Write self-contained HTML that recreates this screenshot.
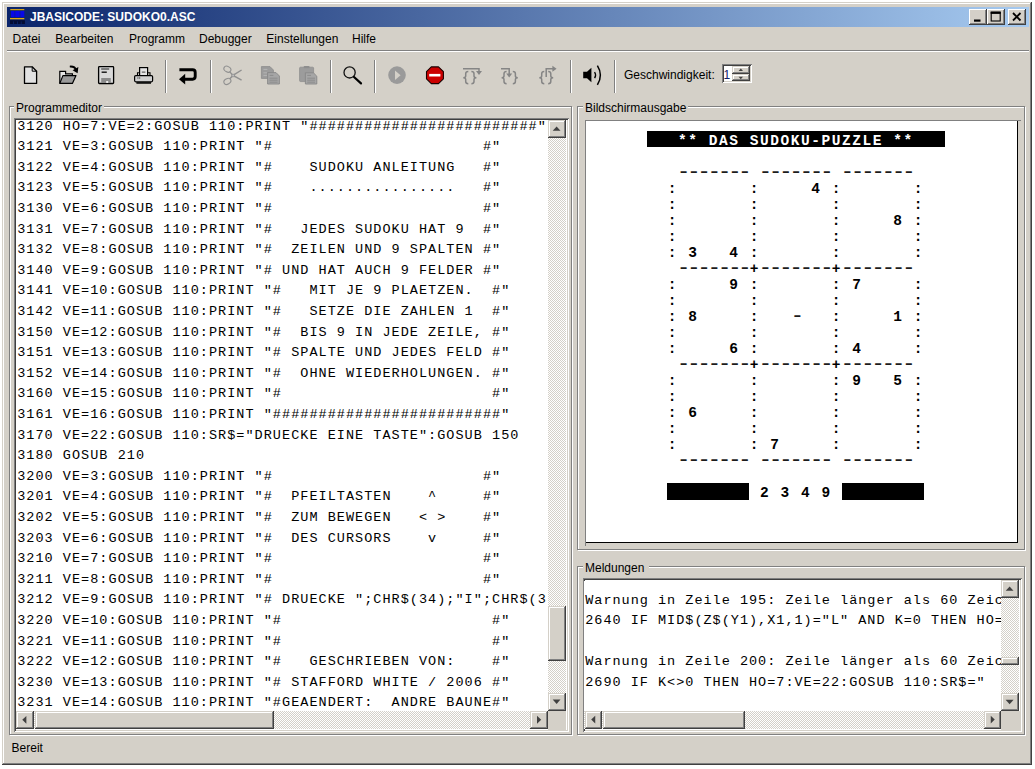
<!DOCTYPE html>
<html lang="de">
<head>
<meta charset="utf-8">
<title>JBASICODE: SUDOKO0.ASC</title>
<style>
html,body{margin:0;padding:0;}
body{width:1035px;height:769px;background:#fff;position:relative;overflow:hidden;
  font-family:"Liberation Sans",sans-serif;font-size:12px;color:#000;}
div,span,pre{box-sizing:border-box;}
.abs,.abs>*{position:absolute;}
#win{position:absolute;left:2px;top:2px;width:1030px;height:763px;background:#d4d0c8;
  box-shadow:inset -1px -1px #404040, inset 1px 1px #d4d0c8, inset -2px -2px #808080, inset 2px 2px #fff;}
#title{position:absolute;left:7px;top:7px;width:1022px;height:20px;
  background:linear-gradient(90deg,#0a246a 0%,#a6caf0 100%);}
#ttext{position:absolute;left:30px;top:7px;height:20px;line-height:20px;color:#fff;font-weight:bold;
  font-size:12px;white-space:pre;letter-spacing:0px;}
.cbtn{position:absolute;top:9px;height:16px;width:17.5px;background:#d4d0c8;
  box-shadow:inset -1px -1px #404040, inset 1px 1px #fff, inset -2px -2px #808080, inset 2px 2px #d4d0c8;}
.menu{position:absolute;top:31px;height:16px;line-height:16px;font-size:12px;white-space:pre;transform-origin:0 50%;}
.hl{position:absolute;height:1px;}
.vl{position:absolute;width:1px;}
.tsep{position:absolute;top:60px;height:33px;width:2px;border-left:1px solid #808080;border-right:1px solid #fff;}
.grp{position:absolute;border:1px solid #808080;box-shadow:1px 1px #fff, inset 1px 1px #fff;}
.glabel{position:absolute;background:#d4d0c8;font-size:12px;line-height:14px;height:14px;white-space:pre;padding-left:2px;}
.sunk{position:absolute;background:#fff;
  box-shadow:inset 1px 1px #808080, inset -1px -1px #fff, inset 2px 2px #404040, inset -2px -2px #d4d0c8;}
.track{position:absolute;background:conic-gradient(#fff 25%,#d4d0c8 0 50%,#fff 0 75%,#d4d0c8 0) 0 0/2px 2px;}
.sbtn{position:absolute;background:#d4d0c8;
  box-shadow:inset -1px -1px #404040, inset 1px 1px #d4d0c8, inset -2px -2px #808080, inset 2px 2px #fff;}
.sbtn svg{position:absolute;left:0;top:0;width:100%;height:100%;}
.mono{font-family:"Liberation Mono",monospace;margin:0;white-space:pre;position:absolute;color:#000;}
#edclip{position:absolute;left:16px;top:120px;width:530.5px;height:591px;overflow:hidden;background:#fff;}
#edtext{left:1.2px;top:-3.3px;font-size:13.5px;letter-spacing:1.03px;line-height:20.6px;}
#msgclip{position:absolute;left:584px;top:580.5px;width:417px;height:130.5px;overflow:hidden;background:#fff;}
#msgtext{left:1.2px;top:10.1px;font-size:13.5px;letter-spacing:1.0px;line-height:20.6px;}
#scr{position:absolute;left:646.8px;top:132.5px;width:300px;height:380px;
  font-family:"Liberation Mono",monospace;font-weight:bold;font-size:14.5px;letter-spacing:1.54px;}
.srow{position:absolute;left:0.6px;height:16px;line-height:16px;white-space:pre;width:297px;}
.srow.inv{color:#fff;}
.invbg{position:absolute;left:0;top:-1.7px;background:#000;height:16.5px;width:298.4px;}
.dsh{position:absolute;top:0.7px;margin-left:-1.2px;font-weight:normal;font-size:22px;letter-spacing:-2.96px;line-height:16px;color:#1c1c1c;}
.cur{display:inline-block;width:10.24px;letter-spacing:0;font-weight:normal;font-size:22px;line-height:16px;vertical-align:top;text-align:center;position:relative;top:0.7px;color:#1c1c1c;}
.pls{position:absolute;top:0;line-height:16px;}
.blk{position:absolute;top:-1.5px;width:82px;height:16.5px;background:#000;}
svg{display:block;overflow:visible;}
</style>
</head>
<body>
<div id="win"></div>
<!-- title bar -->
<div id="title"></div>
<svg style="position:absolute;left:10px;top:9px" width="15" height="16" viewBox="0 0 15 16">
  <rect x="0.3" y="0" width="14" height="1.2" fill="#d0a020"/>
  <rect x="0.9" y="2" width="13.4" height="6.2" fill="#0808e8"/>
  <rect x="4.4" y="2" width="0.9" height="6.2" fill="#0a1c9a"/><rect x="9.6" y="2" width="0.9" height="6.2" fill="#0a1c9a"/>
  <rect x="0" y="9" width="14.3" height="1.3" fill="#e0a818"/>
  <rect x="0" y="11.2" width="14.9" height="3.8" fill="#030c34"/>
  <rect x="3.2" y="12.4" width="0.8" height="2.6" fill="#0a246a"/><rect x="7" y="12.4" width="0.8" height="2.6" fill="#0a246a"/><rect x="10.8" y="12.4" width="0.8" height="2.6" fill="#0a246a"/>
</svg>
<div id="ttext">JBASICODE: SUDOKO0.ASC</div>
<div class="cbtn" style="left:969px"><svg width="18" height="16"><rect x="5" y="10.5" width="6.5" height="2.2" fill="#000"/></svg></div>
<div class="cbtn" style="left:987px"><svg width="18" height="16"><rect x="4.2" y="3.2" width="9" height="8.8" fill="none" stroke="#000" stroke-width="1.1"/><rect x="3.7" y="2.7" width="10" height="2.2" fill="#000"/></svg></div>
<div class="cbtn" style="left:1008px;width:18px"><svg width="18" height="16"><path d="M5 4 L12.5 11.5 M12.5 4 L5 11.5" stroke="#000" stroke-width="1.8" fill="none"/></svg></div>
<!-- menu bar -->
<div class="menu" id="m0" style="left:12.5px">Datei</div>
<div class="menu" id="m1" style="left:55.3px">Bearbeiten</div>
<div class="menu" id="m2" style="left:129px">Programm</div>
<div class="menu" id="m3" style="left:199px">Debugger</div>
<div class="menu" id="m4" style="left:266.3px">Einstellungen</div>
<div class="menu" id="m5" style="left:352px">Hilfe</div>
<div class="hl" style="left:7px;top:50px;width:1022px;background:#808080"></div>
<div class="hl" style="left:7px;top:51px;width:1022px;background:#fff"></div>
<!-- toolbar -->
<svg id="tb" style="position:absolute;left:0;top:55px" width="780" height="40" viewBox="0 55 780 40">
  <!-- new -->
  <path d="M24.5 66.8 H32.2 L36.6 71.2 V83.4 H24.5 Z" fill="#e2e2e2" stroke="#000" stroke-width="1.3" stroke-linejoin="round"/>
  <path d="M32.2 66.8 V71.2 H36.6" fill="none" stroke="#000" stroke-width="1"/>
  <!-- open -->
  <path d="M59.8 83.2 V71.4 H65.6 V73.8 H72.4 V75.4" fill="#e6e6e6" stroke="#000" stroke-width="1.2"/>
  <path d="M62.9 75.6 H76 L72.4 83.4 H59.8 Z" fill="#9a9a9a" stroke="#000" stroke-width="1.2" stroke-linejoin="round"/>
  <path d="M69.8 66.6 Q75 66.2 76.2 70.2" fill="none" stroke="#000" stroke-width="1.9"/>
  <path d="M72.6 70.2 L78.4 67 L77.6 73.2 Z" fill="#000"/>
  <!-- save -->
  <rect x="98.6" y="66.7" width="15" height="16.8" rx="0.8" fill="#d9d9d9" stroke="#000" stroke-width="1.3"/>
  <rect x="101.2" y="68.2" width="8" height="1.6" fill="#666"/>
  <rect x="101.6" y="71.5" width="5.2" height="1.4" fill="#111"/>
  <rect x="101.2" y="78" width="9.6" height="5" fill="#8a8a8a"/>
  <rect x="106.2" y="81" width="2" height="2" fill="#eee"/>
  <!-- print -->
  <rect x="139.6" y="67.6" width="8" height="8" fill="#e4e4e4" stroke="#000" stroke-width="1.2"/>
  <rect x="141.8" y="71.6" width="3.6" height="1" fill="#444"/>
  <path d="M137.5 75.5 V72.8 H139.4 M150 75.5 V72.8 H148" fill="none" stroke="#000" stroke-width="1.1"/>
  <rect x="134.6" y="75.6" width="18" height="6.2" rx="1.2" fill="#d0d0d0" stroke="#000" stroke-width="1.2"/>
  <rect x="136.4" y="82" width="14.6" height="1.8" fill="#111"/>
  <rect x="137.4" y="77.4" width="1" height="1.2" fill="#333"/><rect x="139.2" y="77.4" width="1" height="1.2" fill="#333"/>
  <!-- wrap arrow -->
  <path d="M179.4 69.8 H192.6 Q195.2 69.8 195.2 72.4 V76.6 Q195.2 79.2 192.6 79.2 H184" fill="none" stroke="#000" stroke-width="2.9"/>
  <path d="M179 79.2 L185.2 73.8 V84.6 Z" fill="#000"/>
  <!-- cut (disabled) -->
  <g fill="none" stroke="#909090" stroke-width="1.1">
    <ellipse cx="227.4" cy="69.2" rx="3.7" ry="2.7" transform="rotate(30 227.4 69.2)"/>
    <ellipse cx="227.4" cy="81.4" rx="3.7" ry="2.7" transform="rotate(-30 227.4 81.4)"/>
    <path d="M229.6 71.6 L233 75.4 L241.6 80.2 M229.6 79 L233 75.4 L241.6 70" stroke-width="1.4"/>
  </g>
  <rect x="231.8" y="74.2" width="2.6" height="2.6" fill="#bdbdbd" stroke="#8e8e8e" stroke-width="0.7"/>
  <!-- copy (disabled) -->
  <path d="M261.4 66.6 H270 L273.4 70 V78.4 H261.4 Z" fill="#9c9c9c" stroke="#8c8c8c" stroke-width="0.8"/>
  <path d="M263.4 69.4 H267.4 M263.4 72.8 H267 M263.4 75.4 H267" stroke="#b4b4b4" stroke-width="1"/>
  <path d="M267.6 72.6 H276 L279.4 76 V84 H267.6 Z" fill="#a6a6a6" stroke="#888" stroke-width="0.9"/>
  <path d="M269.6 75.4 H273.4 M269.4 78.2 H277.6 M269.4 80.2 H277.6 M269.4 82.2 H277.6" stroke="#8a8a8a" stroke-width="0.9"/>
  <!-- paste (disabled) -->
  <rect x="299.6" y="67.2" width="14" height="14.4" rx="1" fill="#9c9c9c" stroke="#8e8e8e" stroke-width="0.8"/>
  <rect x="303.6" y="66" width="6" height="2.2" rx="1" fill="#8e8e8e"/>
  <path d="M305.4 72.8 H313.4 L316.8 76.2 V84 H305.4 Z" fill="#a6a6a6" stroke="#888" stroke-width="0.9"/>
  <path d="M307.2 75.4 H311 M307.2 78.2 H315 M307.2 80.2 H315 M307.2 82.2 H315" stroke="#8a8a8a" stroke-width="0.9"/>
  <!-- search -->
  <circle cx="349.6" cy="72.4" r="5.6" fill="none" stroke="#111" stroke-width="1.3"/>
  <path d="M354 77 L361 83.4" stroke="#000" stroke-width="2.2" stroke-linecap="round"/>
  <!-- run (disabled) -->
  <circle cx="397" cy="75.1" r="8.8" fill="#9a9a9a"/>
  <path d="M395 70.4 V80 L400.6 75.2 Z" fill="#d4d0c8"/>
  <!-- stop -->
  <path d="M431.3 66.9 H438.5 L443.4 71.6 V78.8 L438.5 83.6 H431.3 L426.5 78.8 V71.6 Z" fill="#cc0000" stroke="#1a0000" stroke-width="1.1" stroke-linejoin="round"/>
  <rect x="429.2" y="73.9" width="11.2" height="2.6" fill="#fff"/>
  <!-- step icons (disabled) -->
  <g fill="none" stroke="#858585" stroke-width="1.5">
    <path d="M463 68.8 H479 V72"/>
    <path d="M468.3 71.6 Q465.7 71.6 465.7 73.8 V75.9 Q465.7 77.7 463.3 77.7 Q465.7 77.7 465.7 79.5 V81.6 Q465.7 83.8 468.3 83.8"/>
    <path d="M471.4 71.6 Q474.0 71.6 474.0 73.8 V75.9 Q474.0 77.7 476.4 77.7 Q474.0 77.7 474.0 79.5 V81.6 Q474.0 83.8 471.4 83.8"/>
    <path d="M501 68.8 H509.2 V74"/>
    <path d="M506.6 71.6 Q504.0 71.6 504.0 73.8 V75.9 Q504.0 77.7 501.6 77.7 Q504.0 77.7 504.0 79.5 V81.6 Q504.0 83.8 506.6 83.8"/>
    <path d="M512.8 71.6 Q515.4 71.6 515.4 73.8 V75.9 Q515.4 77.7 517.8 77.7 Q515.4 77.7 515.4 79.5 V81.6 Q515.4 83.8 512.8 83.8"/>
    <path d="M546.2 77 V68.8 H553"/>
    <path d="M544.3 71.6 Q541.7 71.6 541.7 73.8 V75.9 Q541.7 77.7 539.3 77.7 Q541.7 77.7 541.7 79.5 V81.6 Q541.7 83.8 544.3 83.8"/>
    <path d="M548.2 71.6 Q550.8 71.6 550.8 73.8 V75.9 Q550.8 77.7 553.2 77.7 Q550.8 77.7 550.8 79.5 V81.6 Q550.8 83.8 548.2 83.8"/>
  </g>
  <path d="M476 71 H482 L479 75 Z" fill="#858585"/>
  <path d="M506.2 73.4 H512.2 L509.2 77.4 Z" fill="#858585"/>
  <path d="M552.4 65.8 V71.8 L556.6 68.8 Z" fill="#858585"/>
  <!-- speaker -->
  <path d="M583.2 71.8 H587 L591.4 67.8 V82.2 L587 78.2 H583.2 Z" fill="#000"/>
  <path d="M594.6 72 Q596.6 75 594.6 78.2" fill="none" stroke="#000" stroke-width="1.3"/>
  <path d="M597.4 65.6 Q603.4 75.2 597.4 84.8" fill="none" stroke="#000" stroke-width="1.5"/>
</svg>
<div class="tsep" style="left:165px"></div>
<div class="tsep" style="left:210px"></div>
<div class="tsep" style="left:330px"></div>
<div class="tsep" style="left:374px"></div>
<div class="tsep" style="left:570px"></div>
<div class="tsep" style="left:614px"></div>
<div class="menu" id="gl" style="left:624px;top:67px">Geschwindigkeit:</div>
<!-- spinner -->
<div class="sunk" style="left:721.5px;top:64px;width:30px;height:19px"></div>
<div style="position:absolute;left:723.5px;top:67.5px;width:8px;height:15px;line-height:15px;font-size:12px;color:#10206a">1</div>
<div class="sbtn" style="left:732px;top:66px;width:17.5px;height:7.5px"><svg viewBox="0 0 17.5 7.5"><path d="M6.6 5 L8.8 2.6 L11 5 Z" fill="#404040"/></svg></div>
<div class="sbtn" style="left:732px;top:73.5px;width:17.5px;height:7.5px"><svg viewBox="0 0 17.5 7.5"><path d="M6.6 2.8 L8.8 5.2 L11 2.8 Z" fill="#404040"/></svg></div>

<!-- left group: Programmeditor -->
<div class="grp" style="left:9px;top:106px;width:563px;height:629px"></div>
<div class="glabel" id="g0" style="left:14px;top:101px;width:90px">Programmeditor</div>
<div class="sunk" style="left:14px;top:118px;width:554.5px;height:614px"></div>
<div id="edclip">
<pre class="mono" id="edtext">3120 HO=7:VE=2:GOSUB 110:PRINT "#########################"
3121 VE=3:GOSUB 110:PRINT "#                       #"
3122 VE=4:GOSUB 110:PRINT "#    SUDOKU ANLEITUNG   #"
3123 VE=5:GOSUB 110:PRINT "#    ................   #"
3130 VE=6:GOSUB 110:PRINT "#                       #"
3131 VE=7:GOSUB 110:PRINT "#   JEDES SUDOKU HAT 9  #"
3132 VE=8:GOSUB 110:PRINT "#  ZEILEN UND 9 SPALTEN #"
3140 VE=9:GOSUB 110:PRINT "# UND HAT AUCH 9 FELDER #"
3141 VE=10:GOSUB 110:PRINT "#   MIT JE 9 PLAETZEN.  #"
3142 VE=11:GOSUB 110:PRINT "#   SETZE DIE ZAHLEN 1  #"
3150 VE=12:GOSUB 110:PRINT "#  BIS 9 IN JEDE ZEILE, #"
3151 VE=13:GOSUB 110:PRINT "# SPALTE UND JEDES FELD #"
3152 VE=14:GOSUB 110:PRINT "#  OHNE WIEDERHOLUNGEN. #"
3160 VE=15:GOSUB 110:PRINT "#                       #"
3161 VE=16:GOSUB 110:PRINT "#########################"
3170 VE=22:GOSUB 110:SR$="DRUECKE EINE TASTE":GOSUB 150
3180 GOSUB 210
3200 VE=3:GOSUB 110:PRINT "#                       #"
3201 VE=4:GOSUB 110:PRINT "#  PFEILTASTEN    ^     #"
3202 VE=5:GOSUB 110:PRINT "#  ZUM BEWEGEN   &lt; &gt;    #"
3203 VE=6:GOSUB 110:PRINT "#  DES CURSORS    v     #"
3210 VE=7:GOSUB 110:PRINT "#                       #"
3211 VE=8:GOSUB 110:PRINT "#                       #"
3212 VE=9:GOSUB 110:PRINT "# DRUECKE ";CHR$(34);"I";CHR$(34);" FUER INFO #"
3220 VE=10:GOSUB 110:PRINT "#                       #"
3221 VE=11:GOSUB 110:PRINT "#                       #"
3222 VE=12:GOSUB 110:PRINT "#   GESCHRIEBEN VON:    #"
3230 VE=13:GOSUB 110:PRINT "# STAFFORD WHITE / 2006 #"
3231 VE=14:GOSUB 110:PRINT "#GEAENDERT:  ANDRE BAUNE#"</pre>
</div>
<!-- editor vertical scrollbar -->
<div class="track" style="left:548px;top:120px;width:18px;height:591px"></div>
<div class="sbtn" style="left:548px;top:120px;width:18px;height:17.5px"><svg viewBox="0 0 18 18"><path d="M4.6 11 L8.6 6.6 L12.6 11 Z" fill="#404040"/></svg></div>
<div class="sbtn" style="left:548px;top:605.6px;width:18px;height:55px"></div>
<div class="sbtn" style="left:548px;top:693px;width:18px;height:17.5px"><svg viewBox="0 0 18 18"><path d="M4.6 6.8 L8.6 11.2 L12.6 6.8 Z" fill="#404040"/></svg></div>
<!-- editor horizontal scrollbar -->
<div class="track" style="left:16px;top:711px;width:532px;height:18px"></div>
<div class="sbtn" style="left:16px;top:711px;width:17.6px;height:18px"><svg viewBox="0 0 18 18"><path d="M10.6 4.8 L6.4 8.8 L10.6 12.8 Z" fill="#404040"/></svg></div>
<div class="sbtn" style="left:34.5px;top:711px;width:239.2px;height:18px"></div>
<div class="sbtn" style="left:530px;top:711px;width:18px;height:18px"><svg viewBox="0 0 18 18"><path d="M7 4.8 L11.2 8.8 L7 12.8 Z" fill="#404040"/></svg></div>
<div style="position:absolute;left:548px;top:711px;width:18px;height:19px;background:#d4d0c8"></div>

<!-- right top group: Bildschirmausgabe -->
<div class="grp" style="left:577px;top:106px;width:448px;height:444px"></div>
<div class="glabel" id="g1" style="left:583px;top:101px;width:105px">Bildschirmausgabe</div>
<div class="hl" style="left:585px;top:120px;width:436px;background:#808080"></div>
<div class="vl" style="left:585px;top:120px;height:426px;background:#808080"></div>
<div style="position:absolute;left:586px;top:121px;width:432px;height:422px;background:#fff;border-right:1px solid #000;border-bottom:1px solid #000"></div>
<div id="scr">
<div class="invbg"></div><div class="srow inv" style="top:0.0px">   ** DAS SUDOKU-PUZZLE **   </div>
<div class="srow" style="top:32.0px"><span class="dsh" style="left:30.72px">-------</span><span class="dsh" style="left:112.64px">-------</span><span class="dsh" style="left:194.56px">-------</span></div>
<div class="srow" style="top:48.0px">  :       :     4 :       :  </div>
<div class="srow" style="top:64.0px">  :       :       :       :  </div>
<div class="srow" style="top:80.0px">  :       :       :     8 :  </div>
<div class="srow" style="top:96.0px">  :       :       :       :  </div>
<div class="srow" style="top:112.0px">  : 3   4 :       :       :  </div>
<div class="srow" style="top:128.0px"><span class="dsh" style="left:30.72px">-------</span><span class="dsh" style="left:112.64px">-------</span><span class="dsh" style="left:194.56px">-------</span><span class="pls" style="left:102.40px">+</span><span class="pls" style="left:184.32px">+</span></div>
<div class="srow" style="top:144.0px">  :     9 :       : 7     :  </div>
<div class="srow" style="top:160.0px">  :       :       :       :  </div>
<div class="srow" style="top:176.0px">  : 8     :   <span class="cur">-</span>   :     1 :  </div>
<div class="srow" style="top:192.0px">  :       :       :       :  </div>
<div class="srow" style="top:208.0px">  :     6 :       : 4     :  </div>
<div class="srow" style="top:224.0px"><span class="dsh" style="left:30.72px">-------</span><span class="dsh" style="left:112.64px">-------</span><span class="dsh" style="left:194.56px">-------</span><span class="pls" style="left:102.40px">+</span><span class="pls" style="left:184.32px">+</span></div>
<div class="srow" style="top:240.0px">  :       :       : 9   5 :  </div>
<div class="srow" style="top:256.0px">  :       :       :       :  </div>
<div class="srow" style="top:272.0px">  : 6     :       :       :  </div>
<div class="srow" style="top:288.0px">  :       :       :       :  </div>
<div class="srow" style="top:304.0px">  :       : 7     :       :  </div>
<div class="srow" style="top:320.0px"><span class="dsh" style="left:30.72px">-------</span><span class="dsh" style="left:112.64px">-------</span><span class="dsh" style="left:194.56px">-------</span></div>
<div class="srow" style="top:352.0px"><span class="blk" style="left:20.0px"></span><span class="blk" style="left:195.0px"></span>           2 3 4 9           </div>
</div>

<!-- right bottom group: Meldungen -->
<div class="grp" style="left:577px;top:566px;width:448px;height:169px"></div>
<div class="glabel" id="g2" style="left:583px;top:561px;width:66px">Meldungen</div>
<div class="sunk" style="left:582.5px;top:578px;width:439px;height:153.5px"></div>
<div id="msgclip">
<pre class="mono" id="msgtext">Warnung in Zeile 195: Zeile länger als 60 Zeichen
2640 IF MID$(Z$(Y1),X1,1)="L" AND K=0 THEN HO=7:VE=22:GOSUB 110

Warnung in Zeile 200: Zeile länger als 60 Zeichen
2690 IF K&lt;&gt;0 THEN HO=7:VE=22:GOSUB 110:SR$="</pre>
</div>
<!-- messages vertical scrollbar -->
<div class="track" style="left:1001px;top:580.5px;width:18px;height:130.5px"></div>
<div class="sbtn" style="left:1001px;top:580px;width:18px;height:17.5px"><svg viewBox="0 0 18 18"><path d="M4.6 11 L8.6 6.6 L12.6 11 Z" fill="#404040"/></svg></div>
<div class="sbtn" style="left:1001px;top:657px;width:18px;height:8px"></div>
<div class="sbtn" style="left:1001px;top:693px;width:18px;height:18px"><svg viewBox="0 0 18 18"><path d="M4.6 6.8 L8.6 11.2 L12.6 6.8 Z" fill="#404040"/></svg></div>
<!-- messages horizontal scrollbar -->
<div class="track" style="left:584px;top:711px;width:417px;height:18px"></div>
<div class="sbtn" style="left:585px;top:711px;width:17.4px;height:17.6px"><svg viewBox="0 0 18 18"><path d="M10.6 4.8 L6.4 8.8 L10.6 12.8 Z" fill="#404040"/></svg></div>
<div class="sbtn" style="left:603px;top:711px;width:141.6px;height:17.6px"></div>
<div class="sbtn" style="left:984px;top:711px;width:17.3px;height:17.6px"><svg viewBox="0 0 18 18"><path d="M7 4.8 L11.2 8.8 L7 12.8 Z" fill="#404040"/></svg></div>
<div style="position:absolute;left:1001px;top:711px;width:18.5px;height:18.5px;background:#d4d0c8"></div>
<!-- status bar -->
<div class="menu" id="st" style="left:11.6px;top:739.5px">Bereit</div>
</body>
</html>
